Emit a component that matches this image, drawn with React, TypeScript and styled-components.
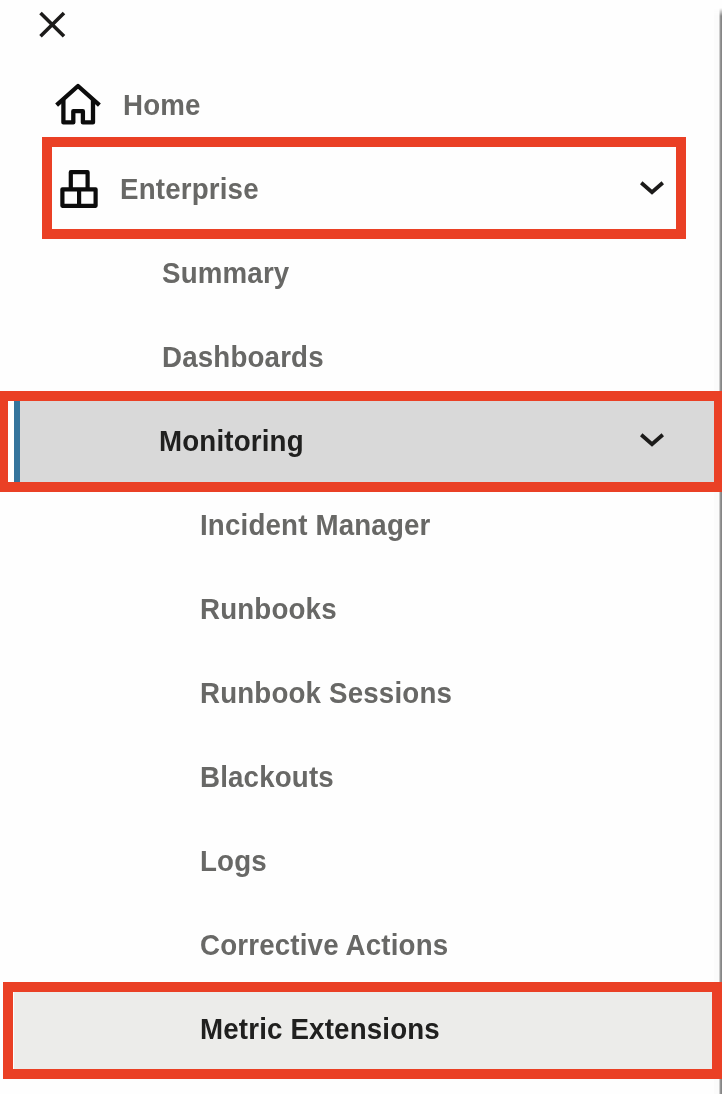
import React from "react";
import styled, { createGlobalStyle } from "styled-components";

const GlobalStyle = createGlobalStyle`
  *, *::before, *::after { box-sizing: border-box; }
  body { margin: 0; background: #fefefe; font-family: "Liberation Sans", Arial, sans-serif; }
`;

const Shell = styled.div`
  display: flex;
  position: relative;
  width: 722px;
  height: 1094px;
  overflow: hidden;
`;

const Drawer = styled.nav`
  flex: 1;
  display: flex;
  flex-direction: column;
`;

const DrawerEdge = styled.div`
  position: absolute;
  top: 8px;
  right: 0;
  bottom: 0;
  width: 8px;
  background: linear-gradient(to right, #fbfbfb 5px, #cdcdcd 5px, #cdcdcd 6px, #959595 6px, #959595 7px, #858585 7px);
  mask-image: linear-gradient(to bottom, transparent, #000 8px);
`;

const Header = styled.header`
  height: 63px;
  flex: none;
  padding: 11px 0 0 39px;
`;

const CloseButton = styled.button`
  display: block;
  padding: 0;
  border: 0;
  background: none;
`;

const Glyph = styled.svg<{ $color?: string }>`
  display: block;
  flex: none;
  fill: none;
  stroke: ${(p) => p.$color ?? "#1c1b1a"};
`;

const List = styled.ul`
  margin: 0;
  padding: 0;
  list-style: none;
`;

type Tone = "plain" | "open" | "current";

const fills: Record<Tone, string> = {
  plain: "transparent",
  open: "#d9d9d9",
  current: "#ececea",
};

const Item = styled.li<{ $tone: Tone }>`
  position: relative;
  display: flex;
  height: 84px;
  margin-left: 14px;
  background: ${(p) => fills[p.$tone]};
  border-left: ${(p) => (p.$tone === "open" ? "6px solid #34749c" : "0 solid")};
  color: ${(p) => (p.$tone === "plain" ? "#686866" : "#20201f")};
`;

const Row = styled.a<{ $indent: number }>`
  flex: 1;
  display: flex;
  align-items: center;
  padding: 0 58px 0 ${(p) => p.$indent}px;
`;

const IconSlot = styled.span<{ $width: number }>`
  width: ${(p) => p.$width}px;
  flex: none;
`;

const Label = styled.span`
  flex: 1;
  font-size: 29px;
  font-weight: 700;
  line-height: 32px;
  letter-spacing: 0.18px;
  transform: scaleX(0.955);
  transform-origin: left center;
  white-space: nowrap;
`;

const Highlight = styled.span<{ $top: number; $left: number; $width: number; $height: number }>`
  position: absolute;
  z-index: 1;
  top: ${(p) => p.$top}px;
  left: ${(p) => p.$left}px;
  width: ${(p) => p.$width}px;
  height: ${(p) => p.$height}px;
  border: 10px solid #ea4025;
  pointer-events: none;
`;

const CloseIcon = () => (
  <Glyph width="27" height="28" viewBox="0 0 27 28" strokeWidth="3.6">
    <path d="M1.5 2 25 25.2M25 2 1.5 25.2" />
  </Glyph>
);

const HomeIcon = () => (
  <Glyph $color="#0c0c0c" width="46" height="44" viewBox="0 0 46 44" strokeWidth="4.3" strokeLinejoin="round">
    <path d="M1.6 22.2 23 3 44.4 22.2" />
    <path d="M8.4 17V39.4H18.3V28.2H27.9V39.4H38V17" />
  </Glyph>
);

const BlocksIcon = () => (
  <Glyph $color="#0c0c0c" width="38" height="40" viewBox="0 0 38 40" strokeWidth="4.2" strokeLinejoin="round">
    <path d="M10.8 20V3.2H27.6V20" />
    <path d="M2.4 20.3H35.6V36.8H2.4ZM19.1 20.3V36.8" />
  </Glyph>
);

const Chevron = () => (
  <Glyph width="24" height="16" viewBox="0 0 24 16" strokeWidth="3.8">
    <path d="M1.2 1.8 12 11.3 22.8 1.8" />
  </Glyph>
);

interface Entry {
  label: string;
  indent: number;
  tone?: Tone;
  icon?: React.ReactNode;
  iconWidth?: number;
  expanded?: boolean;
  frame?: [number, number, number, number];
}

const entries: Entry[] = [
  { label: "Home", indent: 41, icon: <HomeIcon />, iconWidth: 68 },
  { label: "Enterprise", indent: 46, icon: <BlocksIcon />, iconWidth: 60, expanded: true, frame: [-10, 28, 644, 102] },
  { label: "Summary", indent: 148 },
  { label: "Dashboards", indent: 148 },
  { label: "Monitoring", indent: 138.5, tone: "open", expanded: true, frame: [-8, -22, 726, 101] },
  { label: "Incident Manager", indent: 186 },
  { label: "Runbooks", indent: 186 },
  { label: "Runbook Sessions", indent: 186 },
  { label: "Blackouts", indent: 186 },
  { label: "Logs", indent: 186 },
  { label: "Corrective Actions", indent: 186 },
  { label: "Metric Extensions", indent: 186, tone: "current", frame: [-5, -11, 719, 97] },
];

export default function App() {
  return (
    <Shell>
      <GlobalStyle />
      <DrawerEdge />
      <Drawer>
        <Header>
          <CloseButton aria-label="Close">
            <CloseIcon />
          </CloseButton>
        </Header>
        <List>
          {entries.map((e) => (
            <Item key={e.label} $tone={e.tone ?? "plain"}>
              <Row $indent={e.indent}>
                {e.icon && <IconSlot $width={e.iconWidth ?? 0}>{e.icon}</IconSlot>}
                <Label>{e.label}</Label>
                {e.expanded && <Chevron />}
              </Row>
              {e.frame && (
                <Highlight $top={e.frame[0]} $left={e.frame[1]} $width={e.frame[2]} $height={e.frame[3]} />
              )}
            </Item>
          ))}
        </List>
      </Drawer>
    </Shell>
  );
}
